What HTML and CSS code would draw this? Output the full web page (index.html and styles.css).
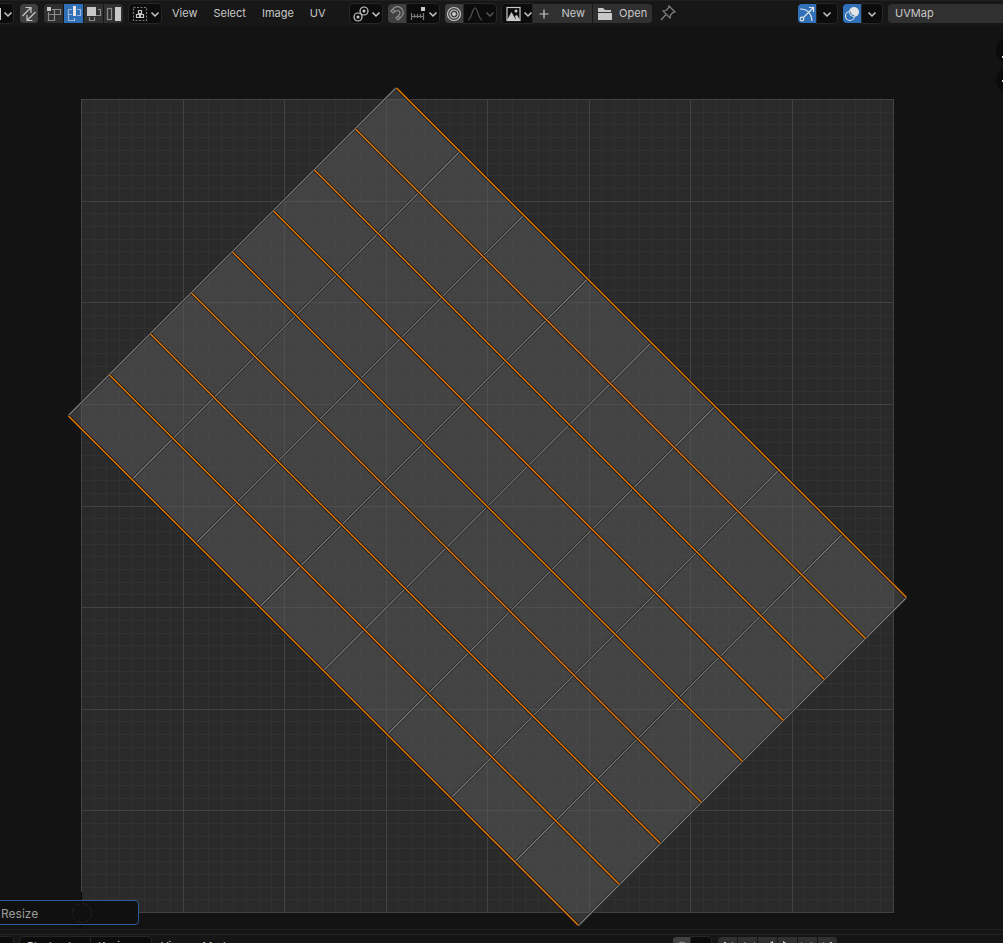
FILE: index.html
```html
<!DOCTYPE html>
<html lang="en">
<head>
<meta charset="utf-8">
<title>UV Editor</title>
<link rel="stylesheet" href="styles.css">
</head>
<body>
<svg class="defs" aria-hidden="true">
  <symbol id="chev" viewBox="0 0 10 18"><path d="M1.500 7.500l3.500 3.500 3.500-3.500" fill="none" stroke="currentColor" stroke-width="1.5"/></symbol>
</svg>
<header class="bar">
  <button class="btn dark cut" aria-label="Editor type"><i class="edge"></i><svg class="chev"><use href="#chev"/></svg></button>
  <button class="btn grey icon" aria-label="Sync selection"><svg viewBox="0 0 18 18"><path d="M2.500 11L10.500 3M5.500 2.500H11V8M15.500 7L7.500 15M12.500 15.500H7V10" class="ln"/></svg></button>
  <div class="group modes">
    <button class="btn mid icon" aria-label="Vertex"><svg viewBox="0 0 18 18"><path d="M7 4.500H15.500V9.500H3.500M3.500 7V15.500H9.500V4.500" class="ln dim"/><rect x="2" y="2" width="4" height="4" class="fl"/></svg></button>
    <button class="btn blue icon" aria-label="Edge"><svg viewBox="0 0 18 18"><path d="M7 4.500H3.500V15.500H9.500V13M3.500 9.500H7M12 4.500H15.500V10.500H12" class="ln dim"/><rect x="8" y="1" width="3" height="10" class="fl"/></svg></button>
    <button class="btn mid icon" aria-label="Face"><svg viewBox="0 0 18 18"><path d="M13 4.500H15.500V10.500H11M4.500 12V15.500H9.500V12" class="ln dim"/><rect x="2" y="2" width="9" height="9" class="fl"/></svg></button>
    <button class="btn mid icon" aria-label="Island"><svg viewBox="0 0 18 18"><rect x="2.500" y="3.500" width="4" height="11" class="ln dim"/><rect x="10" y="2" width="6" height="14" class="fl"/></svg></button>
  </div>
  <button class="btn dark drop" aria-label="Sticky selection"><svg viewBox="0 0 18 18"><rect x="2.500" y="2.500" width="13" height="13" class="ln dim" stroke-dasharray="2 1.500"/><path d="M7.500 5.500h3v3h-3zM5.500 9.500h3v3h-3zM9.500 9.500h3v3h-3z" class="ln"/></svg><svg class="chev"><use href="#chev"/></svg></button>
  <nav class="menus"><button>View</button><button>Select</button><button>Image</button><button>UV</button></nav>
  <button class="btn dark drop" aria-label="Pivot"><svg viewBox="0 0 18 18"><circle cx="6" cy="12" r="4" class="ln"/><circle cx="12" cy="6" r="4" class="ln"/><circle cx="6" cy="12" r="1.500" class="fl"/><circle cx="12" cy="6" r="1.500" class="fl"/></svg><svg class="chev"><use href="#chev"/></svg></button>
  <div class="group">
    <button class="btn grey icon snap" aria-label="Snap"><svg viewBox="0 0 18 18"><path d="M3 6L6 3Q10 0 14 4Q17 8 13 12L10 15L8 13L11 10Q13 8 11 6Q9 5 8 6L5 8ZM5 4L7 6.500M12 13L10 11" class="ln dim"/></svg></button>
    <button class="btn dark drop" aria-label="Snap to"><svg viewBox="0 0 18 18"><path d="M2.500 8V15M5.500 9V13M8.500 9V13M11.500 9V13M14.500 8V15M2.500 11.500H15" class="ln dim"/><rect x="12" y="2" width="4" height="4" class="fl"/></svg><svg class="chev"><use href="#chev"/></svg></button>
  </div>
  <div class="group">
    <button class="btn grey icon snap" aria-label="Proportional editing"><svg viewBox="0 0 18 18"><circle cx="9" cy="9" r="6.500" class="ln"/><circle cx="9" cy="9" r="4" class="ln"/><circle cx="9" cy="9" r="2" class="fl"/></svg></button>
    <button class="btn dark drop off" aria-label="Falloff"><svg viewBox="0 0 18 18"><path d="M2 15C6 14 6 3 9 3S12 14 16 15" class="ln"/></svg><svg class="chev"><use href="#chev"/></svg></button>
  </div>
  <div class="group image">
    <button class="btn dark drop" aria-label="Browse image"><svg viewBox="0 0 18 18"><rect x="3" y="2.500" width="13" height="13" class="ln"/><path d="M3 15L7.500 7L12 15ZM11 11L13 10L16 15H12Z" class="fl"/><circle cx="12" cy="6" r="1.500" class="fl"/></svg><svg class="chev"><use href="#chev"/></svg></button>
    <button class="btn mid text"><svg viewBox="0 0 18 18"><path d="M8 4.500V13.500M3.500 9H12.500" class="ln"/></svg><span>New</span></button>
    <button class="btn mid text"><svg viewBox="0 0 18 18"><path d="M2 3H7L9 5H15V7H2ZM2 8H16V15H2Z" class="fl"/></svg><span>Open</span></button>
  </div>
  <button class="pin" aria-label="Pin"><svg viewBox="0 0 18 18"><path d="M10 2L16 8L14 8.500L11.500 11L11 14L4 7L7 6.500L9.500 4ZM7 10.500L2 16" class="ln dim"/></svg></button>
  <div class="right">
    <div class="group">
      <button class="btn blue icon" aria-label="Gizmos"><svg viewBox="0 0 18 18"><path d="M2 4Q13 4 14 16M5 13L15 3M11 2.500H15.500V7" class="ln"/><circle cx="4" cy="14" r="1.800" class="ln"/></svg></button>
      <button class="btn dark narrow" aria-label="Gizmo options"><svg class="chev"><use href="#chev"/></svg></button>
    </div>
    <div class="group">
      <button class="btn blue icon" aria-label="Overlays"><svg viewBox="0 0 18 18"><circle cx="11" cy="7" r="5" class="fl"/><circle cx="7" cy="11" r="4.500" class="ln"/><path d="M7 6.500A5 5 0 0 0 11.500 11" fill="none" stroke="#2f70b8"/></svg></button>
      <button class="btn dark narrow" aria-label="Overlay options"><svg class="chev"><use href="#chev"/></svg></button>
    </div>
    <input class="uvmap" type="text" value="UVMap" aria-label="UV map">
  </div>
</header>
<main class="editor">
  <svg class="canvas" viewBox="0 26 1003 903" role="img" aria-label="UV layout">
    <rect x="81" y="99" width="813" height="814" fill="#2a2a2a"/>
    <g id="grid" shape-rendering="crispEdges"></g>
    <path d="M396.500 88L906.500 598L579.500 925L68.500 416Z" fill="#5c5c5c" fill-opacity=".5"/>
    <g id="mesh" fill="none"></g>
    <path d="M81.500 892V929" stroke="#050505"/>
    <g fill="#0b0b0b"><circle cx="1009" cy="50" r="13"/><circle cx="1009" cy="80" r="13"/></g>
    <path d="M1002 57H1003M1002 81H1003" stroke="#ddd" stroke-width="2"/>
  </svg>
  <button class="operator">Resize<svg class="cursor" viewBox="0 0 22 22"><circle cx="11" cy="11" r="9.500" fill="none" stroke="#2a2020" stroke-dasharray="5 2.500"/></svg></button>
</main>
<footer class="timeline">
  <button class="btn dark cut" aria-label="Timeline type"></button>
  <div class="group pair"><button class="btn dark playback">Playback</button><button class="btn dark keying">Keying</button></div>
  <nav class="menus"><button>View</button><button>Marker</button></nav>
  <div class="transport">
    <div class="group"><button class="btn grey icon" aria-label="Auto keying"><svg viewBox="0 0 18 18"><circle cx="9" cy="9" r="5" class="ln dim"/></svg></button><button class="btn dark narrow" aria-label="Keying options"></button></div>
    <div class="group play">
      <button class="btn mid icon" aria-label="First frame"><svg viewBox="0 0 18 18"><path d="M5 4h2v10H5zM14 4v10L8 9z" class="fl"/></svg></button>
      <button class="btn mid icon" aria-label="Previous keyframe"><svg viewBox="0 0 18 18"><path d="M6 4l4 5-4 5-4-5zM16 4v10l-5-5z" class="fl"/></svg></button>
      <button class="btn mid icon" aria-label="Play backwards"><svg viewBox="0 0 18 18"><path d="M14 3v12L4 9z" class="fl"/></svg></button>
      <button class="btn mid icon" aria-label="Play"><svg viewBox="0 0 18 18"><path d="M4 3v12l10-6z" class="fl"/></svg></button>
      <button class="btn mid icon" aria-label="Next keyframe"><svg viewBox="0 0 18 18"><path d="M12 4l4 5-4 5-4-5zM2 4v10l5-5z" class="fl"/></svg></button>
      <button class="btn mid icon" aria-label="Last frame"><svg viewBox="0 0 18 18"><path d="M11 4h2v10h-2zM4 4v10l6-5z" class="fl"/></svg></button>
    </div>
  </div>
</footer>
<script src="canvas.js"></script>
</body>
</html>
```
FILE: styles.css
```css
* { box-sizing: border-box; }
body {
  margin: 0;
  height: 100vh;
  display: flex;
  flex-direction: column;
  overflow: hidden;
  background: #131313;
  color: #c8c8c8;
  font: 11px/19px Inter, "Liberation Sans", sans-serif;
}
button, input { font: inherit; color: inherit; border: 0; padding: 0; margin: 0; background: none; }
svg { display: block; flex: none; }
.defs { position: absolute; width: 0; height: 0; }
.ln { fill: none; stroke: currentColor; stroke-width: 1.2; }
.dim { opacity: .6; }
.fl { fill: currentColor; }

.bar {
  flex: none;
  height: 26px;
  display: flex;
  align-items: flex-start;
  gap: 6px;
  padding-top: 3px;
  background: #171717;
  border-top: 1px solid #202020;
}
.btn { height: 19px; display: flex; align-items: center; justify-content: center; flex: none; border-radius: 4px; }
.btn svg, .pin svg { width: 18px; height: 18px; }
.btn svg.chev { width: 10px; height: 18px; }
.dark { background: #0c0c0c; box-shadow: 0 0 0 1px #262626; }
.grey { background: #404040; }
.mid { background: #303030; }
.blue { background: #2f70b8; color: #e4e4e4; }
.icon { width: 18px; }
.snap { width: 19px; }
.drop { width: 32px; padding-left: 2px; justify-content: flex-start; }
.drop .chev { margin-left: 1px; }
.narrow { width: 20px; }
.off { color: #555; }
.cut { width: 13px; margin-right: 1px; border-radius: 0 4px 4px 0; justify-content: space-between; }
.edge { width: 1px; height: 12px; background: #ccc; }
.group { display: flex; flex: none; }
.group > .btn { border-radius: 0; }
.group > .btn:first-child { border-radius: 4px 0 0 4px; }
.group > .btn:last-child { border-radius: 0 4px 4px 0; }
.modes { gap: 1px; }
.modes .btn { width: 19px; }
.menus { display: flex; gap: 16px; padding: 0 18px 0 5px; }
.image { gap: 1px; }
.image .drop { width: 30px; }
.text { width: 59px; justify-content: flex-start; padding-left: 3px; gap: 1px; }
.text span { flex: 1; text-align: center; }
.pin { margin-left: 1px; }
.right { margin-left: auto; display: flex; gap: 6px; }
.right .group { gap: 1px; }
.uvmap { width: 115px; height: 19px; padding-left: 7px; background: #303030; border-radius: 4px 0 0 4px; }

.editor { position: relative; flex: 1; min-height: 0; }
.canvas { width: 100%; height: 100%; }
.operator {
  position: absolute;
  left: -4px;
  bottom: 4px;
  width: 143px;
  height: 25px;
  padding: 2px 0 0 4px;
  text-align: left;
  font-size: 12px;
  background: #101010;
  border: 1px solid #2a5c97;
  border-radius: 4px;
  color: #9c9c9c;
}
.cursor { position: absolute; left: 74px; top: 1px; width: 22px; height: 22px; }

.timeline {
  flex: none;
  height: 14px;
  display: flex;
  align-items: flex-start;
  gap: 6px;
  padding-top: 8px;
  overflow: hidden;
  background: linear-gradient(#202020 1px, #161616 1px 5px, #222 5px 6px, #151515 6px);
}
.pair { gap: 1px; }
.pair .btn { justify-content: flex-start; padding-left: 7px; }
.playback { width: 70px; }
.keying { width: 60px; }
.timeline .menus { padding-left: 4px; }
.transport { margin-left: auto; display: flex; gap: 7px; padding-right: 166px; }
.play { gap: 1px; }
.play .btn { width: 19px; }
```
FILE: canvas.js
```js
const NS = "http://www.w3.org/2000/svg";
function add(parent, d, stroke, width) {
  const p = document.createElementNS(NS, "path");
  p.setAttribute("d", d);
  p.setAttribute("stroke", stroke);
  p.setAttribute("stroke-width", width);
  parent.appendChild(p);
}

const grid = document.getElementById("grid");
function gridLines(count, color) {
  for (let i = 0; i <= count; i++) {
    const x = Math.round(81 + i * 812 / count) + 0.5;
    const y = Math.round(99 + i * 813 / count) + 0.5;
    add(grid, `M${x} 99V913M81 ${y}H894`, color, 1);
  }
}
gridLines(64, "#313131");
gridLines(8, "#424242");

const mesh = document.getElementById("mesh");
for (let i = 0; i <= 8; i++) {
  const s = i * 63.75;
  const d = `M${68.5 + s} ${415.5 + s}L${396 + s} ${88 + s}`;
  add(mesh, d, "#202020", 2.6);
  add(mesh, d, "#808080", 1.1);
}
for (let i = 0; i <= 8; i++) {
  const s = i * 41;
  const d = `M${68.5 + s} ${416 - s}L${578.5 + s} ${925.5 - s}`;
  add(mesh, d, "#15100a", 3);
  add(mesh, d, "#e87d0d", 1.4);
}
```
